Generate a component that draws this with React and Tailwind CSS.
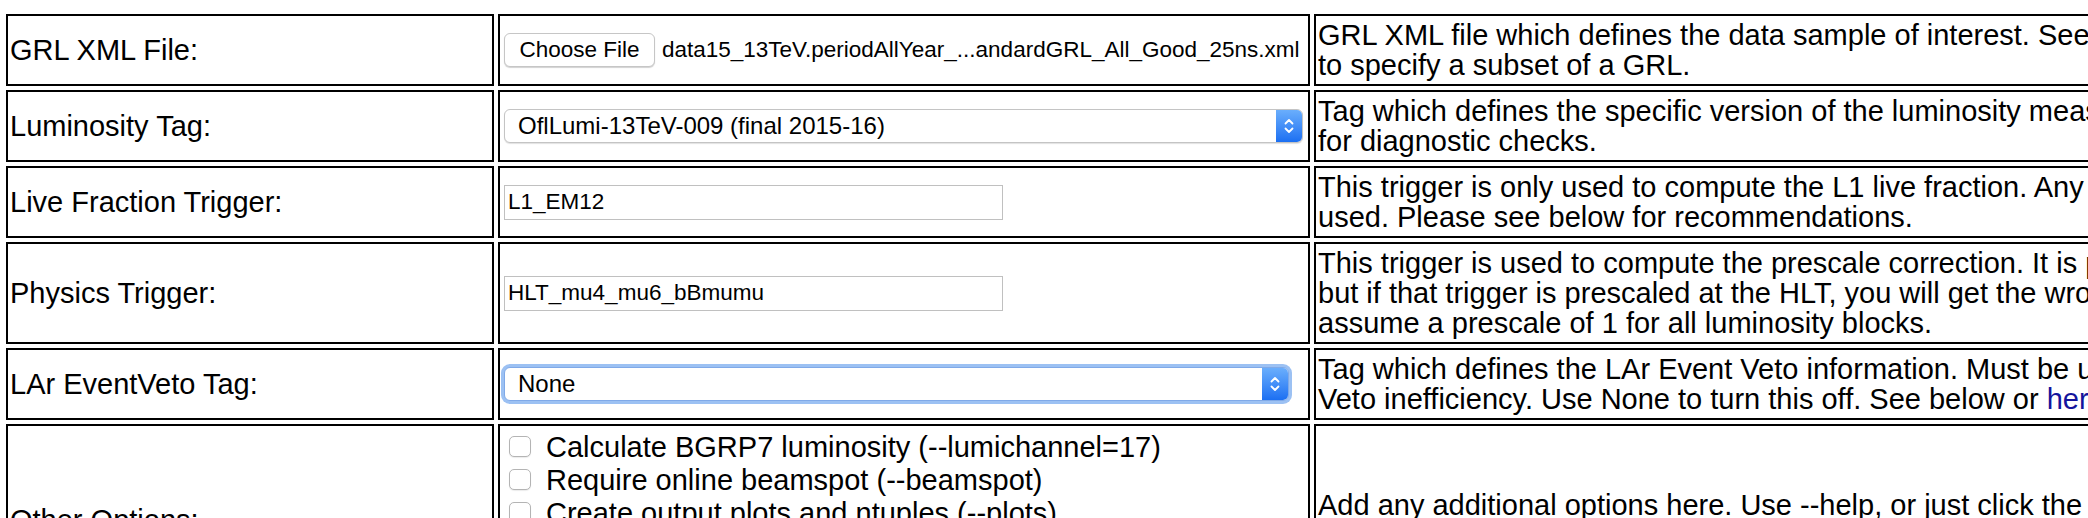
import React from 'react';

const Chevrons = () => (
  <svg width="12" height="20" viewBox="0 0 12 20" fill="none" stroke="white" strokeWidth="1.8" strokeLinecap="round" strokeLinejoin="round">
    <path d="M2.5 7.5 L6 4 L9.5 7.5" />
    <path d="M2.5 12.5 L6 16 L9.5 12.5" />
  </svg>
);

const Cell = ({ children, className = '' }) => (
  <div className={`border-2 border-black px-[2px] py-[4px] flex items-center ${className}`}>{children}</div>
);

const MacSelect = ({ value, focused }) => (
  <div
    className={`ml-[2px] flex h-[34px] items-stretch rounded-[6px] border bg-white shadow-[0_1px_1px_rgba(0,0,0,0.12)] ${
      focused ? 'w-[785px] border-[#7fa9e8] ring-[3px] ring-[#9cc1f3]' : 'w-[799px] border-[#c4c4c4]'
    }`}
  >
    <span className="flex flex-1 items-center pl-[13px] text-[24px] text-black">{value}</span>
    <span className="flex w-[26px] items-center justify-center rounded-r-[5px] bg-linear-to-b from-[#6aaefc] to-[#1b6ff2]">
      <Chevrons />
    </span>
  </div>
);

const TextInput = ({ value }) => (
  <input
    readOnly
    value={value}
    className="ml-[2px] h-[35px] w-[499px] border border-[#c0c0c0] bg-white px-[3px] text-[22.5px] text-black outline-none"
  />
);

const Checkbox = ({ label }) => (
  <div className="flex h-[33px] items-center">
    <span className="ml-[7px] mr-[15px] h-[21px] w-[22px] shrink-0 rounded-[5px] border border-[#b4b4b4] bg-white shadow-[0_1px_1px_rgba(0,0,0,0.08)]" />
    <span className="whitespace-nowrap">{label}</span>
  </div>
);

const Lines = ({ lines }) => (
  <div className="whitespace-nowrap">
    {lines.map((l, i) => (
      <div key={i}>{l}</div>
    ))}
  </div>
);

export default function App() {
  return (
    <div className="h-[518px] w-[2088px] overflow-hidden bg-white font-['Liberation_Sans',Arial,Helvetica,sans-serif] text-[29px] leading-[30px] text-black">
      <div className="grid w-[2300px] grid-cols-[488px_812px_980px] gap-[4px] pl-[6px] pt-[14px]">
        {/* GRL file */}
        <Cell>GRL XML File:</Cell>
        <Cell>
          <span className="ml-[2px] flex h-[34px] w-[151px] shrink-0 items-center justify-center rounded-[6px] border border-[#c6c6c6] bg-white text-[22.5px] shadow-[0_1px_1px_rgba(0,0,0,0.18)]">
            Choose File
          </span>
          <span className="ml-[7px] whitespace-nowrap text-[22.5px]">data15_13TeV.periodAllYear_...andardGRL_All_Good_25ns.xml</span>
        </Cell>
        <Cell>
          <Lines
            lines={[
              'GRL XML file which defines the data sample of interest. See below for how',
              'to specify a subset of a GRL.',
            ]}
          />
        </Cell>

        {/* Luminosity tag */}
        <Cell>Luminosity Tag:</Cell>
        <Cell>
          <MacSelect value="OflLumi-13TeV-009 (final 2015-16)" />
        </Cell>
        <Cell>
          <Lines
            lines={[
              'Tag which defines the specific version of the luminosity measurement to use. Others',
              'for diagnostic checks.',
            ]}
          />
        </Cell>

        {/* Live fraction */}
        <Cell>Live Fraction Trigger:</Cell>
        <Cell>
          <TextInput value="L1_EM12" />
        </Cell>
        <Cell>
          <Lines
            lines={[
              'This trigger is only used to compute the L1 live fraction. Any L1 trigger can be',
              'used. Please see below for recommendations.',
            ]}
          />
        </Cell>

        {/* Physics trigger */}
        <Cell>Physics Trigger:</Cell>
        <Cell>
          <TextInput value="HLT_mu4_mu6_bBmumu" />
        </Cell>
        <Cell>
          <Lines
            lines={[
              'This trigger is used to compute the prescale correction. It is possible to specify',
              'but if that trigger is prescaled at the HLT, you will get the wrong answer. None will',
              'assume a prescale of 1 for all luminosity blocks.',
            ]}
          />
        </Cell>

        {/* LAr veto */}
        <Cell>LAr EventVeto Tag:</Cell>
        <Cell>
          <MacSelect value="None" focused />
        </Cell>
        <Cell>
          <div className="whitespace-nowrap">
            <div>Tag which defines the LAr Event Veto information. Must be used to compute the</div>
            <div>
              Veto inefficiency. Use None to turn this off. See below or <span className="text-[#14149c]">here</span>.
            </div>
          </div>
        </Cell>

        {/* Other options */}
        <Cell className="min-h-[192px]">Other Options:</Cell>
        <Cell className="items-start">
          <div>
            <Checkbox label="Calculate BGRP7 luminosity (--lumichannel=17)" />
            <Checkbox label="Require online beamspot (--beamspot)" />
            <Checkbox label="Create output plots and ntuples (--plots)" />
            <Checkbox label="Print verbose output (--verbose)" />
            <Checkbox label="Use online luminosity (--online)" />
          </div>
        </Cell>
        <Cell>
          <Lines
            lines={[
              'Add any additional options here. Use --help, or just click the Calculate button',
              'with --help to see all options.',
            ]}
          />
        </Cell>
      </div>
    </div>
  );
}
